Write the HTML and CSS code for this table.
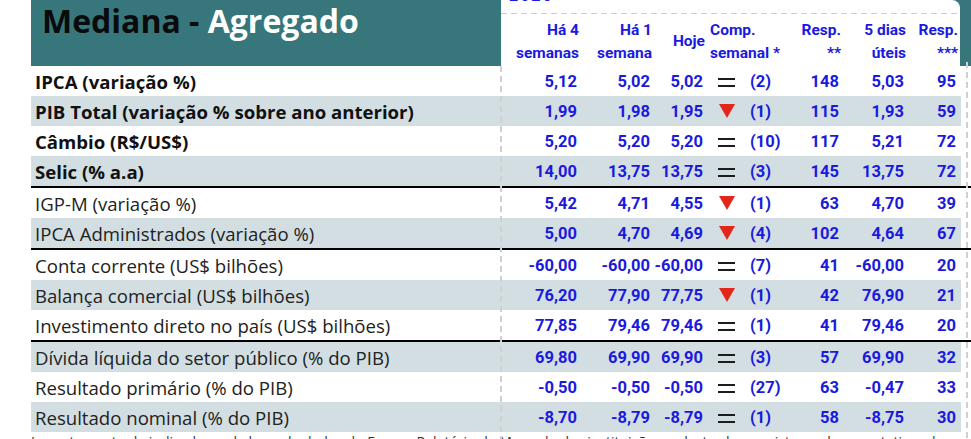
FILE: index.html
```html
<!DOCTYPE html>
<html lang="pt-BR">
<head>
<meta charset="utf-8">
<title>Mediana - Agregado</title>
<link rel="stylesheet" href="styles.css">
</head>
<body>
<div class="sheet">
  <div class="head">
    <h1 class="title"><span class="dark">Mediana - </span>Agregado</h1>
    <div class="panel">
      <div class="year"><span>2025</span></div>
      <div class="cols">
        <div class="hc"><span>Há 4</span><span>semanas</span></div>
        <div class="hc"><span>Há 1</span><span>semana</span></div>
        <div class="hc"><span>Hoje</span></div>
        <div class="hc comp"><span>Comp.</span><span>semanal *</span></div>
        <div class="hc"><span>Resp.</span><span>**</span></div>
        <div class="hc"><span>5 dias</span><span>úteis</span></div>
        <div class="hc"><span>Resp.</span><span>***</span></div>
      </div>
    </div>
  </div>

  <div class="rows">
    <div class="row">
      <div class="lbl b">IPCA (variação %)</div>
      <div class="n">5,12</div><div class="n">5,02</div><div class="n">5,02</div>
      <div class="sym"><span class="eq"></span></div><div class="p">(2)</div>
      <div class="n">148</div><div class="n">5,03</div><div class="n">95</div>
    </div>
    <div class="row alt">
      <div class="lbl b">PIB Total (variação % sobre ano anterior)</div>
      <div class="n">1,99</div><div class="n">1,98</div><div class="n">1,95</div>
      <div class="sym"><svg class="down" viewBox="0 0 16 14"><polygon points="0,0 16,0 8,14"/></svg></div><div class="p">(1)</div>
      <div class="n">115</div><div class="n">1,93</div><div class="n">59</div>
    </div>
    <div class="row">
      <div class="lbl b">Câmbio (R$/US$)</div>
      <div class="n">5,20</div><div class="n">5,20</div><div class="n">5,20</div>
      <div class="sym"><span class="eq"></span></div><div class="p">(10)</div>
      <div class="n">117</div><div class="n">5,21</div><div class="n">72</div>
    </div>
    <div class="row alt">
      <div class="lbl b">Selic (% a.a)</div>
      <div class="n">14,00</div><div class="n">13,75</div><div class="n">13,75</div>
      <div class="sym"><span class="eq"></span></div><div class="p">(3)</div>
      <div class="n">145</div><div class="n">13,75</div><div class="n">72</div>
    </div>

    <div class="row sep">
      <div class="lbl">IGP-M (variação %)</div>
      <div class="n">5,42</div><div class="n">4,71</div><div class="n">4,55</div>
      <div class="sym"><svg class="down" viewBox="0 0 16 14"><polygon points="0,0 16,0 8,14"/></svg></div><div class="p">(1)</div>
      <div class="n">63</div><div class="n">4,70</div><div class="n">39</div>
    </div>
    <div class="row alt">
      <div class="lbl">IPCA Administrados (variação %)</div>
      <div class="n">5,00</div><div class="n">4,70</div><div class="n">4,69</div>
      <div class="sym"><svg class="down" viewBox="0 0 16 14"><polygon points="0,0 16,0 8,14"/></svg></div><div class="p">(4)</div>
      <div class="n">102</div><div class="n">4,64</div><div class="n">67</div>
    </div>

    <div class="row sep">
      <div class="lbl">Conta corrente (US$ bilhões)</div>
      <div class="n">-60,00</div><div class="n">-60,00</div><div class="n">-60,00</div>
      <div class="sym"><span class="eq"></span></div><div class="p">(7)</div>
      <div class="n">41</div><div class="n">-60,00</div><div class="n">20</div>
    </div>
    <div class="row alt">
      <div class="lbl">Balança comercial (US$ bilhões)</div>
      <div class="n">76,20</div><div class="n">77,90</div><div class="n">77,75</div>
      <div class="sym"><svg class="down" viewBox="0 0 16 14"><polygon points="0,0 16,0 8,14"/></svg></div><div class="p">(1)</div>
      <div class="n">42</div><div class="n">76,90</div><div class="n">21</div>
    </div>
    <div class="row">
      <div class="lbl">Investimento direto no país (US$ bilhões)</div>
      <div class="n">77,85</div><div class="n">79,46</div><div class="n">79,46</div>
      <div class="sym"><span class="eq"></span></div><div class="p">(1)</div>
      <div class="n">41</div><div class="n">79,46</div><div class="n">20</div>
    </div>

    <div class="row alt sep">
      <div class="lbl">Dívida líquida do setor público (% do PIB)</div>
      <div class="n">69,80</div><div class="n">69,90</div><div class="n">69,90</div>
      <div class="sym"><span class="eq"></span></div><div class="p">(3)</div>
      <div class="n">57</div><div class="n">69,90</div><div class="n">32</div>
    </div>
    <div class="row">
      <div class="lbl">Resultado primário (% do PIB)</div>
      <div class="n">-0,50</div><div class="n">-0,50</div><div class="n">-0,50</div>
      <div class="sym"><span class="eq"></span></div><div class="p">(27)</div>
      <div class="n">63</div><div class="n">-0,47</div><div class="n">33</div>
    </div>
    <div class="row alt">
      <div class="lbl">Resultado nominal (% do PIB)</div>
      <div class="n">-8,70</div><div class="n">-8,79</div><div class="n">-8,79</div>
      <div class="sym"><span class="eq"></span></div><div class="p">(1)</div>
      <div class="n">58</div><div class="n">-8,75</div><div class="n">30</div>
    </div>
  </div>

  <p class="foot">Levantamento de indicadores da base de dados do Focus - Relatório de Mercado das instituições cadastradas no sistema de expectativas de mercado</p>

  <div class="vdash left"></div>
  <div class="vdash right"></div>
</div>
</body>
</html>
```

FILE: styles.css
```css
* { box-sizing: border-box; }

body {
  margin: 0;
  background: #fff;
  font-family: "Open Sans", "Noto Sans", sans-serif;
}

.sheet {
  position: relative;
  margin-left: 31px;
  width: 940px;
  height: 439px;
  overflow: hidden;
}

/* header band */
.head {
  display: flex;
  height: 66px;
  background: #37767b;
}

.title {
  width: 470px;
  margin: 0;
  padding-left: 11px;
  font-size: 32px;
  line-height: 42px;
  font-weight: 700;
  color: #fff;
  white-space: nowrap;
}

.title .dark { color: #0b0b0b; }

.panel {
  width: 459px;
  background: #fff;
  border-top-right-radius: 8px;
}

.year {
  height: 14px;
  overflow: hidden;
  padding-left: 8px;
  background: repeating-linear-gradient(to right, #cdcdcd 0 6px, transparent 6px 10px) left bottom / 100% 1.5px no-repeat;
}

.year span {
  display: block;
  margin-top: -12px;
  font-family: Roboto, sans-serif;
  font-weight: 700;
  font-size: 16px;
  line-height: 16px;
  color: #1a1ade;
  letter-spacing: 2px;
}

.cols {
  display: grid;
  grid-template-columns: 78px 73px 53px 87px 49px 65px 52px;
  height: 52px;
  padding-top: 3px;
}

.hc {
  display: flex;
  flex-direction: column;
  align-items: flex-end;
  justify-content: center;
  font-family: Roboto, sans-serif;
  font-weight: 700;
  font-size: 15.5px;
  line-height: 23px;
  color: #1a1ade;
  white-space: nowrap;
}

.hc.comp {
  align-items: flex-start;
  padding-left: 5px;
}

/* body rows */
.row {
  display: grid;
  grid-template-columns: 469px 77px 73px 53px 47px 40px 49px 65px 52px 15px;
  align-items: center;
  height: 30px;
  background: #fff;
}

.row.alt {
  background: linear-gradient(to right, #d2dee1 930px, #fff 930px);
}

.row.sep {
  height: 32px;
  border-top: 2px solid #000;
}

.lbl {
  padding-left: 4px;
  font-size: 18.6px;
  color: #222;
  white-space: nowrap;
}

.lbl.b {
  font-weight: 700;
  color: #111;
}

.n, .p {
  font-family: Roboto, sans-serif;
  font-weight: 700;
  font-size: 16.5px;
  color: #1a1ade;
  white-space: nowrap;
}

.n { text-align: right; }
.p { text-align: left; }

.sym {
  display: flex;
  justify-content: center;
  align-items: center;
}

.eq {
  display: block;
  width: 17px;
  height: 9px;
  margin-top: 3px;
  border-top: 2.5px solid #1c1c1c;
  border-bottom: 2.5px solid #1c1c1c;
}

.down {
  width: 16px;
  height: 14px;
  fill: #e3261b;
}

.foot {
  margin: 0;
  padding-top: 1px;
  font-size: 14px;
  line-height: 18px;
  color: #333;
  white-space: nowrap;
}

/* dashed guides drawn over the table */
.vdash {
  position: absolute;
  bottom: 0;
  width: 1.5px;
  background: repeating-linear-gradient(to bottom, #d0d0d0 0 6px, transparent 6px 10px);
}

.vdash.left { left: 469px; top: 66px; }
.vdash.right { left: 935px; top: 62px; }
```
